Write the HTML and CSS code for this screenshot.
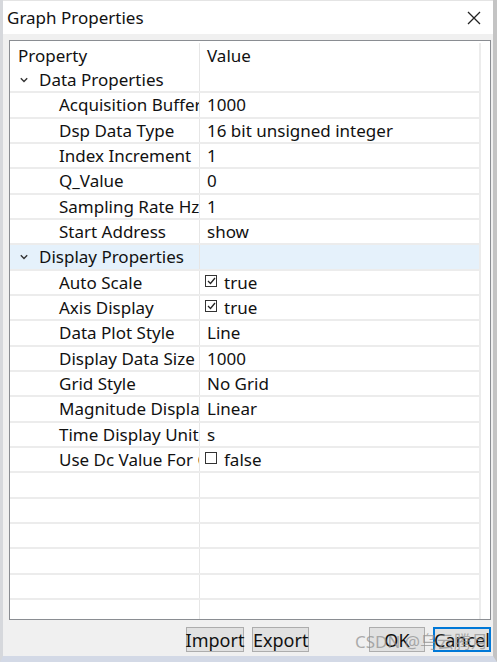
FILE: index.html
```html
<!DOCTYPE html>
<html>
<head>
<meta charset="utf-8">
<link rel="stylesheet" href="styles.css">
</head>
<body>
<div class="window">
  <div class="titlebar">
    <span class="title">Graph Properties</span>
    <svg class="close" width="14" height="14" viewBox="0 0 14 14"><path d="M1 1L13 13M13 1L1 13" stroke="#222" stroke-width="1.3" fill="none"/></svg>
  </div>
  <div class="body">
    <div class="tree">
      <div class="grid">
        <div class="row head"><div class="name">Property</div><div class="val">Value</div></div>
        <div class="row cat"><div class="name"><svg class="chev" width="8" height="6" viewBox="0 0 8 6"><path d="M0.8 1.2L4 4.4L7.2 1.2" stroke="#333" stroke-width="1.4" fill="none"/></svg>Data Properties</div><div class="val"></div></div>
        <div class="row"><div class="name sub">Acquisition Buffer Size</div><div class="val">1000</div></div>
        <div class="row"><div class="name sub">Dsp Data Type</div><div class="val">16 bit unsigned integer</div></div>
        <div class="row"><div class="name sub">Index Increment</div><div class="val">1</div></div>
        <div class="row"><div class="name sub">Q_Value</div><div class="val">0</div></div>
        <div class="row"><div class="name sub">Sampling Rate Hz</div><div class="val">1</div></div>
        <div class="row"><div class="name sub">Start Address</div><div class="val">show</div></div>
        <div class="row cat sel"><div class="name"><svg class="chev" width="8" height="6" viewBox="0 0 8 6"><path d="M0.8 1.2L4 4.4L7.2 1.2" stroke="#333" stroke-width="1.4" fill="none"/></svg>Display Properties</div><div class="val"></div></div>
        <div class="row"><div class="name sub">Auto Scale</div><div class="val"><span class="cb"><svg width="9" height="8" viewBox="0 0 9 8"><path d="M1 4L3.5 6.5L8 1" stroke="#222" stroke-width="1.3" fill="none"/></svg></span>true</div></div>
        <div class="row"><div class="name sub">Axis Display</div><div class="val"><span class="cb"><svg width="9" height="8" viewBox="0 0 9 8"><path d="M1 4L3.5 6.5L8 1" stroke="#222" stroke-width="1.3" fill="none"/></svg></span>true</div></div>
        <div class="row"><div class="name sub">Data Plot Style</div><div class="val">Line</div></div>
        <div class="row"><div class="name sub">Display Data Size</div><div class="val">1000</div></div>
        <div class="row"><div class="name sub">Grid Style</div><div class="val">No Grid</div></div>
        <div class="row"><div class="name sub">Magnitude Display</div><div class="val">Linear</div></div>
        <div class="row"><div class="name sub">Time Display Unit</div><div class="val">s</div></div>
        <div class="row"><div class="name sub">Use Dc Value For Calc</div><div class="val"><span class="cb"></span>false</div></div>
        <div class="row"><div class="name"></div><div class="val"></div></div>
        <div class="row"><div class="name"></div><div class="val"></div></div>
        <div class="row"><div class="name"></div><div class="val"></div></div>
        <div class="row"><div class="name"></div><div class="val"></div></div>
        <div class="row"><div class="name"></div><div class="val"></div></div>
        <div class="row"><div class="name"></div><div class="val"></div></div>
      </div>
    </div>
    <div class="buttons">
      <button class="btn">Import</button>
      <button class="btn">Export</button>
      <span class="spacer"></span>
      <button class="btn">OK</button>
      <button class="btn focus">Cancel</button>
    </div>
    <div class="watermark">CSDN @乌云腾月</div>
  </div>
</div>
</body>
</html>
```
FILE: styles.css
```css
html, body {
  margin: 0;
  padding: 0;
  width: 497px;
  height: 662px;
  overflow: hidden;
  background: #dcdcdc;
}
.window {
  width: 497px;
  height: 662px;
  box-sizing: border-box;
  border-left: 3px solid #d6d8dc;
  border-right: 4px solid #c4c4c4;
  border-bottom: 6px solid #d3d9e6;
  background: #f0f0f0;
  display: flex;
  flex-direction: column;
  font-family: "Noto Sans", "Noto Sans CJK SC", sans-serif;
  font-size: 17px;
  color: #111;
}
.titlebar {
  height: 34px;
  flex: none;
  background: #fff;
  display: flex;
  align-items: center;
  padding: 0 12px 0 4px;
  box-sizing: border-box;
  border-top: 1px solid #e4e4e4;
}
.title {
  flex: 1;
  font-size: 17px;
}
.close {
  display: block;
}
.body {
  flex: 1;
  position: relative;
  padding: 6px 2px 0 6px;
  display: flex;
  flex-direction: column;
}
.tree {
  height: 580px;
  box-sizing: border-box;
  border: 1px solid #8a8d92;
  background: #fff;
  overflow: hidden;
  padding-top: 1.67px;
}
.grid {
  width: 471px;
  border-right: 2px solid #ececec;
  box-sizing: border-box;
}
.row {
  height: 25.333px;
  box-sizing: border-box;
  border-bottom: 2px solid #ececec;
  display: flex;
  align-items: center;
  white-space: nowrap;
}
.row.head {
  border-bottom: none;
}
.row.sel {
  background: #e5f1fb;
}
.name {
  width: 190px;
  height: 100%;
  box-sizing: border-box;
  border-right: 1px solid #e6e6e6;
  overflow: hidden;
  display: flex;
  align-items: center;
  padding-left: 8px;
}
.name.sub {
  padding-left: 49px;
}
.cat .name {
  padding-left: 10px;
}
.chev {
  margin-right: 11px;
  flex: none;
}
.val {
  flex: 1;
  height: 100%;
  display: flex;
  align-items: center;
  padding-left: 7px;
  overflow: hidden;
}
.cb {
  width: 10px;
  height: 10px;
  border: 1px solid #333;
  background: #fff;
  margin-right: 7px;
  margin-left: -2px;
  align-self: flex-start;
  margin-top: 4px;
  display: flex;
  align-items: center;
  justify-content: center;
  flex: none;
}
.buttons {
  display: flex;
  align-items: center;
  margin-top: 7px;
  height: 25px;
  padding-left: 177px;
  gap: 8px;
}
.spacer {
  width: 45px;
}
.btn {
  width: 58px;
  height: 25px;
  box-sizing: border-box;
  background: #e1e1e1;
  border: 1px solid #adadad;
  font-family: "Noto Sans", sans-serif;
  font-size: 18px;
  color: #111;
  padding: 0;
  overflow: visible;
  white-space: nowrap;
  display: flex;
  align-items: center;
  justify-content: center;
}
.btn.focus {
  border: 2px solid #0078d7;
}
.watermark {
  position: absolute;
  left: 352px;
  top: 594px;
  font-size: 17px;
  color: rgba(140, 140, 140, 0.7);
  white-space: nowrap;
  pointer-events: none;
}
```
